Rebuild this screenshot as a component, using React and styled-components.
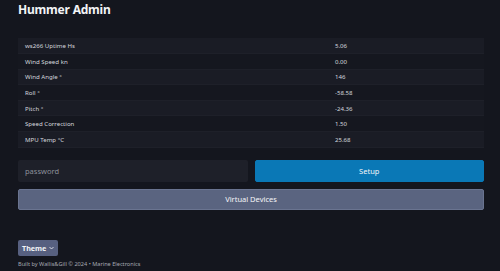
import React from 'react';
import styled, { createGlobalStyle } from 'styled-components';

const Global = createGlobalStyle`
  html, body {
    margin: 0;
    padding: 0;
    background: #14161e;
  }
  body {
    font-family: "Noto Sans", "DejaVu Sans", sans-serif;
    color: #e6e8ee;
  }
`;

const Page = styled.div`
  padding: 2px 16px 0 18px;
  width: 466px;
`;

const Title = styled.h1`
  margin: 0;
  font-size: 12px;
  font-weight: 700;
  line-height: 15px;
  color: #f2f3f6;
  letter-spacing: -0.2px;
`;

const Table = styled.table`
  width: 100%;
  margin-top: 21px;
  border-collapse: collapse;
  font-size: 6.1px;
  color: #d4d7de;
`;

const Row = styled.tr`
  height: 15.6px;
  background: ${p => (p.$odd ? '#1a1c25' : '#15171f')};
  border-bottom: 1px solid #1e2029;
`;

const Cell = styled.td`
  padding: 0 7px;
  width: ${p => p.$w || 'auto'};
`;

const Controls = styled.div`
  display: grid;
  grid-template-columns: 1fr 1fr;
  gap: 7px;
  margin-top: 12px;
`;

const Input = styled.input`
  box-sizing: border-box;
  height: 22px;
  border: none;
  border-radius: 2px;
  background: #1e2029;
  padding: 0 7px;
  font-family: inherit;
  font-size: 7.5px;
  color: #e6e8ee;
  outline: none;
  &::placeholder { color: #8d909a; }
`;

const Button = styled.button`
  box-sizing: border-box;
  height: ${p => p.$h || 22}px;
  border: 1px solid ${p => p.$border};
  border-radius: 2px;
  background: ${p => p.$bg};
  color: #f4f5f8;
  font-family: inherit;
  font-size: 7.5px;
  font-weight: 400;
  grid-column: ${p => (p.$wide ? '1 / -1' : 'auto')};
`;

const Footer = styled.div`
  margin-top: 30px;
  display: flex;
  flex-direction: column;
  align-items: flex-start;
  gap: 4px;
`;

const ThemeButton = styled.button`
  display: flex;
  align-items: center;
  gap: 3px;
  height: 16px;
  padding: 0 4px;
  border: none;
  border-radius: 2px;
  background: #576080;
  color: #f2f3f6;
  font-family: inherit;
  font-size: 7.2px;
  font-weight: 700;
`;

const Credit = styled.div`
  font-size: 5.6px;
  color: #a6a9b2;
`;

const rows = [
  ['ws266 Uptime Hs', '5.06'],
  ['Wind Speed kn', '0.00'],
  ['Wind Angle °', '146'],
  ['Roll °', '-58.58'],
  ['Pitch °', '-24.36'],
  ['Speed Correction', '1.50'],
  ['MPU Temp °C', '25.68'],
];

export default function App() {
  return (
    <>
      <Global />
      <Page>
        <Title>Hummer Admin</Title>
        <Table>
          <tbody>
            {rows.map(([k, v], i) => (
              <Row key={k} $odd={i % 2 === 0}>
                <Cell $w="296px">{k}</Cell>
                <Cell>{v}</Cell>
              </Row>
            ))}
          </tbody>
        </Table>
        <Controls>
          <Input placeholder="password" type="password" />
          <Button $bg="#0a78b6" $border="#0a78b6">Setup</Button>
          <Button $wide $h={21} $bg="#5a6480" $border="#6a7490">Virtual Devices</Button>
        </Controls>
        <Footer>
          <ThemeButton>
            Theme
            <svg width="5" height="4" viewBox="0 0 10 6">
              <path d="M1 1l4 4 4-4" fill="none" stroke="#f2f3f6" strokeWidth="1.6" />
            </svg>
          </ThemeButton>
          <Credit>Built by Wallis&amp;Gill © 2024 • Marine Electronics</Credit>
        </Footer>
      </Page>
    </>
  );
}
